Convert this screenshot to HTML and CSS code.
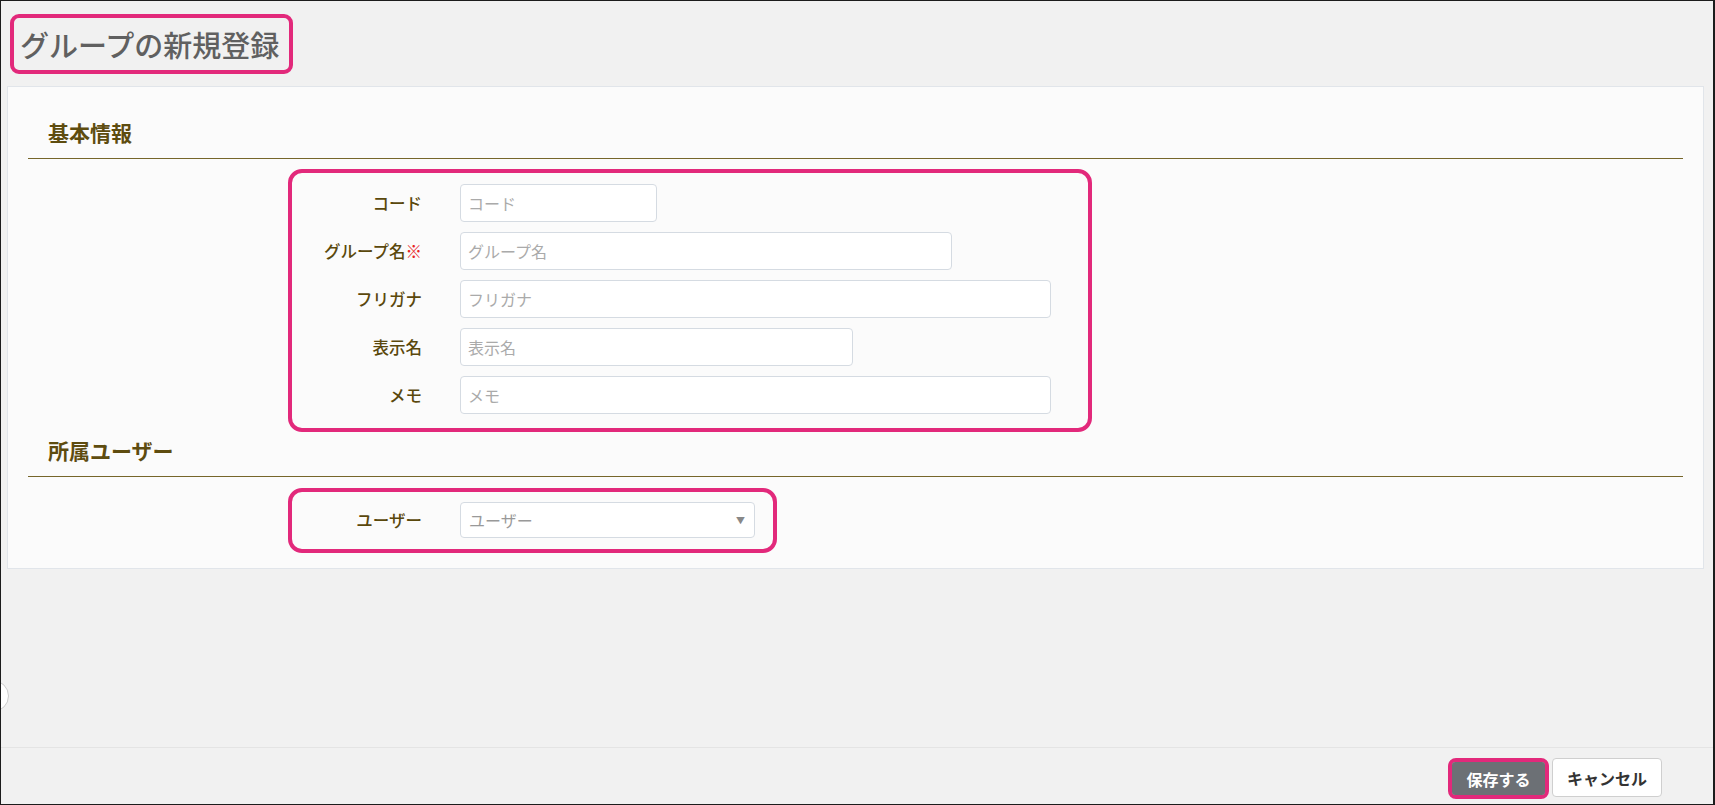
FILE: index.html
```html
<!DOCTYPE html>
<html lang="ja">
<head>
  <meta charset="UTF-8">
  <title>グループの新規登録</title>
  <link rel="stylesheet" href="styles.css">
</head>
<body>

<div class="frame">
  <!-- タイトル -->
  <div class="mark page-title">グループの新規登録</div>

  <div class="panel">
    <!-- 基本情報 -->
    <h2 class="section-title">基本情報</h2>
    <div class="mark form-box">
      <div class="form-grid">
        <label class="form-label">コード</label>
        <input class="form-input w-code" placeholder="コード">

        <label class="form-label">グループ名<span class="required">※</span></label>
        <input class="form-input w-name" placeholder="グループ名">

        <label class="form-label">フリガナ</label>
        <input class="form-input w-full" placeholder="フリガナ">

        <label class="form-label">表示名</label>
        <input class="form-input w-disp" placeholder="表示名">

        <label class="form-label">メモ</label>
        <input class="form-input w-full" placeholder="メモ">
      </div>
    </div>

    <!-- 所属ユーザー -->
    <h2 class="section-title">所属ユーザー</h2>
    <div class="mark form-box form-box-user">
      <div class="form-grid">
        <label class="form-label">ユーザー</label>
        <div class="form-select">
          <span>ユーザー</span>
          <span class="caret">▼</span>
        </div>
      </div>
    </div>
  </div>

  <div class="footer">
    <span class="mark save-wrap"><button class="btn btn-save">保存する</button></span>
    <button class="btn btn-cancel">キャンセル</button>
  </div>

  <span class="edge-handle"></span>
</div>

</body>
</html>
```

FILE: styles.css
```css
html, body {
  margin: 0;
  height: 100%;
  background: #f1f1f1;
  font-family: "Noto Sans CJK JP", "Noto Sans", sans-serif;
}

.frame {
  position: relative;
  box-sizing: border-box;
  width: 1715px;
  height: 805px;
  border: 1px solid #1c1c1c;
  border-right-width: 2px;
  background: #f1f1f1;
  display: flex;
  flex-direction: column;
  overflow: hidden;
}

/* ピンクの枠 */
.mark {
  border: 4px solid #e2297b;
  box-sizing: border-box;
}

.page-title {
  width: 283px;
  height: 60px;
  margin: 13px 0 0 9px;
  padding: 5px 0 0 6px;
  border-radius: 9px;
  font-size: 29px;
  font-weight: 500;
  line-height: 42px;
  color: #606060;
}

.panel {
  box-sizing: border-box;
  width: 1697px;
  margin: 12px 0 0 6px;
  padding-bottom: 15px;
  background: #fbfbfb;
  border: 1px solid #e1e5ea;
}

.section-title {
  margin: 30px 20px 0 20px;
  padding: 0 0 11px 20px;
  font-size: 21px;
  font-weight: 700;
  line-height: 30px;
  color: #5e4c0f;
  border-bottom: 1px solid #76662a;
}

.section-title + .form-box { margin-top: 10px; }
.form-box + .section-title { margin-top: 3px; }

.form-box {
  width: 804px;
  margin-left: 280px;
  padding: 11px 0 14px 0;
  border-radius: 14px;
}

.form-box-user {
  width: 489px;
  padding: 10px 0 11px 0;
  margin-top: 11px !important;
}

.form-grid {
  display: grid;
  grid-template-columns: 130px auto;
  column-gap: 38px;
  row-gap: 10px;
  align-items: center;
  justify-items: start;
}

.form-label {
  justify-self: end;
  font-size: 16.5px;
  font-weight: 500;
  color: #5a480c;
}

.required { color: #e8231f; }

.form-input {
  box-sizing: border-box;
  height: 38px;
  padding: 0 7px;
  border: 1px solid #d5dbe2;
  border-radius: 4px;
  background: #fff;
  font-family: inherit;
  font-size: 16px;
  color: #333;
}

.form-input::placeholder { color: #aaa; }

.w-code { width: 197px; }
.w-name { width: 492px; }
.w-disp { width: 393px; }
.w-full { width: 591px; }

.form-select {
  box-sizing: border-box;
  width: 295px;
  height: 36px;
  padding: 0 9px 0 8px;
  display: flex;
  align-items: center;
  justify-content: space-between;
  border: 1px solid #d5dbe2;
  border-radius: 4px;
  background: #fff;
  font-size: 16px;
  color: #999;
}

.caret {
  font-size: 9px;
  color: #888;
}

.footer {
  margin-top: auto;
  height: 57px;
  border-top: 1px solid #e4e4e4;
  display: flex;
  justify-content: flex-end;
  align-items: flex-start;
  gap: 3px;
  padding: 10px 51px 0 0;
  box-sizing: border-box;
}

.save-wrap {
  display: flex;
  width: 101px;
  height: 41px;
  border-radius: 8px;
}

.btn {
  font-family: inherit;
  font-size: 16px;
  font-weight: 700;
  border-radius: 4px;
  cursor: pointer;
}

.btn-save {
  width: 100%;
  height: 100%;
  border: none;
  border-radius: 3px;
  background: #6c7075;
  color: #fff;
}

.btn-cancel {
  width: 110px;
  height: 39px;
  border: 1px solid #cfcfcf;
  background: #fff;
  color: #333;
}

/* 左端のつまみ */
.edge-handle {
  position: absolute;
  left: -24px;
  top: 679px;
  width: 30px;
  height: 30px;
  border-radius: 50%;
  background: #fff;
  border: 1px solid #ccc;
}
```
